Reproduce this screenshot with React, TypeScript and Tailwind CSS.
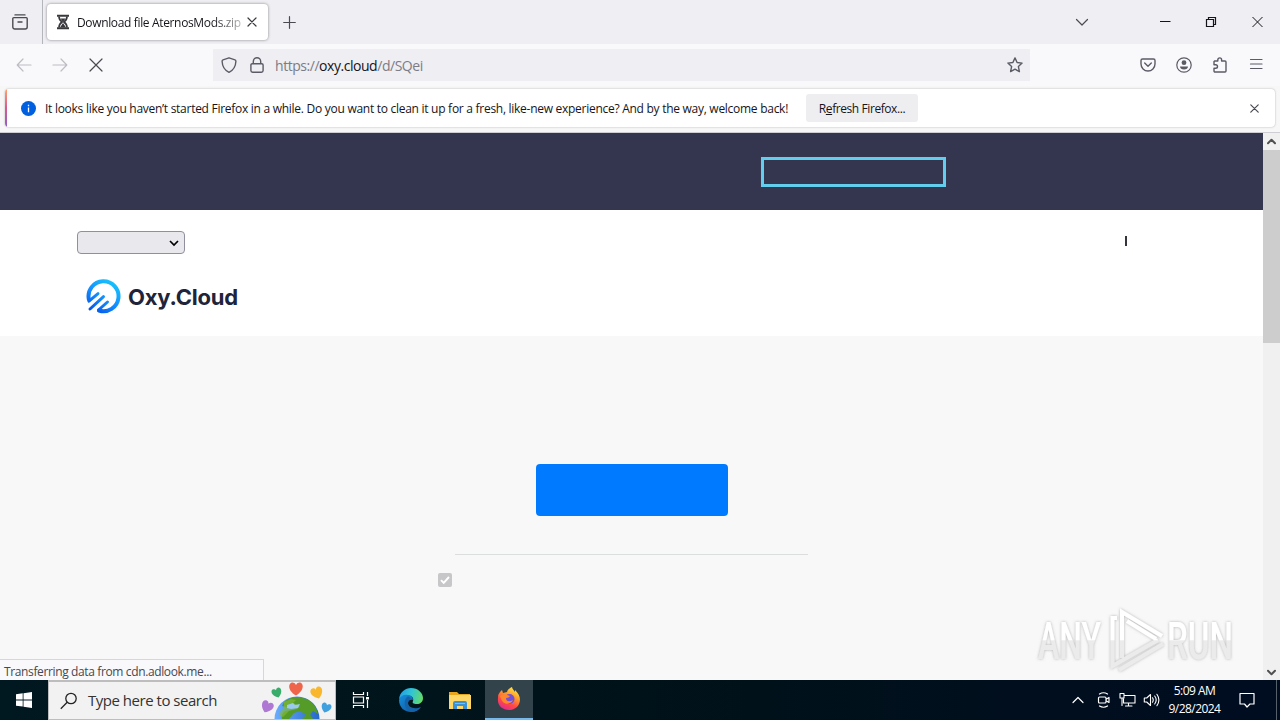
import type { ReactNode } from 'react';

interface IconProps {
  className?: string;
  children: ReactNode;
  box?: number;
}

// Thin line icon used through the browser chrome
function Icon({ className = '', children, box = 16 }: IconProps) {
  return (
    <svg
      aria-hidden
      viewBox={`0 0 ${box} ${box}`}
      className={`block shrink-0 ${className}`}
      fill="none"
      stroke="currentColor"
      strokeWidth="1.2"
      strokeLinecap="round"
      strokeLinejoin="round"
    >
      {children}
    </svg>
  );
}

function TabStrip() {
  return (
    <header className="flex h-[44px] shrink-0 bg-[#eeeef3] text-[#4a4a52]">
      <div className="flex w-[43px] items-center border-r border-[#b4b4bb] pl-3">
        <Icon className="h-4 w-4">
          <path d="M3 .9h10M1.8 3.6h12.4a1 1 0 0 1 1 1V13a2 2 0 0 1-2 2H2.8a2 2 0 0 1-2-2V4.600a1 1 0 0 1 1-1zM6 8h4" strokeWidth="1.4" />
        </Icon>
      </div>
      <div className="mt-1 ml-[4px] flex h-[36px] w-[221px] items-center rounded-[4px] bg-white pl-2 shadow-[0_0_3px_rgba(0,0,0,0.45)]">
        <svg aria-hidden viewBox="0 0 16 16" className="h-4 w-4 shrink-0">
          <path d="M2 1.700h12M2 14.300h12" stroke="#38383d" strokeWidth="2" />
          <path d="M4 2.500c0 3 1 4 3 5.500-2 1.500-3 2.500-3 5.500M12 2.500c0 3-1 4-3 5.500 2 1.500 3 2.500 3 5.500" stroke="#38383d" strokeWidth="1.700" fill="none" />
          <path d="M5.500 4.500h5L8 8zM8 9l3 4.500H5z" fill="#38383d" />
        </svg>
        <div className="ml-[6px] w-[167px] bg-gradient-to-r from-[#15141a] from-80% to-[#cccccc] bg-clip-text pt-[2px] text-[12px] tracking-[-0.35px] whitespace-nowrap text-transparent">
          Download file AternosMods.zip
        </div>
        <Icon className="ml-[3px] h-[10px] w-[10px] text-[#38383d]" box={10}>
          <path d="M1 1l8 8M9 1L1 9" />
        </Icon>
      </div>
      <Icon className="mt-4 ml-[15px] h-[13px] w-[13px]" box={13}>
        <path d="M6.500 .7v11.600M.7 6.500h11.600" />
      </Icon>
      <div className="ml-auto flex h-[44px] items-center">
        <Icon className="h-[14px] w-[14px]" box={14}>
          <path d="M1.500 4.500L7 10l5.500-5.500" />
        </Icon>
        <svg aria-hidden viewBox="0 0 104 12" className="mr-[16px] ml-[71px] h-3 w-[104px]" fill="none" stroke="#15141a">
          <path d="M0 5.500h10.500" />
          <path d="M46.500 3.500h7v7h-7zM48.500 3V1.500h7v7H54" strokeWidth="1.200" />
          <path d="M92.500 1l10 10M102.500 1l-10 10" />
        </svg>
      </div>
    </header>
  );
}

function NavBar() {
  return (
    <div className="flex h-[42px] shrink-0 items-center bg-[#f9f9fb] text-[#5b5b66]">
      <Icon className="ml-4 h-4 w-4 text-[#bdbdc4]">
        <path d="M15 8H1.500M7 2L1.200 8 7 14" />
      </Icon>
      <Icon className="ml-5 h-4 w-4 text-[#bdbdc4]">
        <path d="M1 8h13.500M9 2l5.800 6L9 14" />
      </Icon>
      <Icon className="ml-[21px] h-[14px] w-[14px] text-[#4a4a52]" box={14}>
        <path d="M1 1l12 12M13 1L1 13" />
      </Icon>
      <div className="ml-[110px] flex h-8 w-[817px] items-center bg-[#eeeef3] pl-2">
        <Icon className="h-4 w-4">
          <path d="M8 .8l6 2c.9.3.9.8.9 1.500C14.700 9.500 13 13 8 15.300 3 13 1.300 9.500 1.100 4.300c0-.7 0-1.200.9-1.500z" strokeWidth="1.400" />
        </Icon>
        <Icon className="ml-3 h-4 w-4">
          <path d="M3.200 6.700h9.600a1.300 1.300 0 0 1 1.300 1.300v5.500a1.700 1.700 0 0 1-1.700 1.700H3.600a1.700 1.700 0 0 1-1.700-1.700V8a1.300 1.300 0 0 1 1.300-1.300zM4.300 6.500V4.400a3.700 3.700 0 0 1 7.400 0v2.100" strokeWidth="1.400" />
        </Icon>
        <div className="ml-[10px] text-[14px] tracking-[-0.46px] whitespace-nowrap text-[#7c7c86]">
          https://<span className="text-[#15141a]">oxy.cloud</span>/d/SQei
        </div>
        <Icon className="mr-[7px] ml-auto h-4 w-4">
          <path d="M8 .9l2.100 4.600 5 .6-3.700 3.500 1 5L8 12.200l-4.400 2.400 1-5L.9 6.100l5-.6z" strokeWidth="1.400" />
        </Icon>
      </div>
      <div className="mr-[16px] ml-auto flex items-center gap-[20px]">
        <Icon className="h-4 w-4">
          <path d="M2.500 2h11a1.500 1.500 0 0 1 1.500 1.500V7A7 7 0 0 1 1 7V3.500A1.500 1.500 0 0 1 2.500 2zM4.700 6l3.300 3.200L11.300 6" strokeWidth="1.400" />
        </Icon>
        <Icon className="h-4 w-4">
          <circle cx="8" cy="8" r="7.200" />
          <circle cx="8" cy="5.700" r="2.400" fill="currentColor" stroke="none" />
          <path d="M4 9.500h8c0 1.800-1.700 3-4 3s-4-1.200-4-3z" fill="currentColor" stroke="none" />
        </Icon>
        <Icon className="h-4 w-4">
          <path d="M2.500 4h3.300V2.800a1.900 1.900 0 0 1 3.800 0V4H13a1 1 0 0 1 1 1v9a1 1 0 0 1-1 1H3a1 1 0 0 1-1-1v-2.700h1.700a1.800 1.800 0 0 0 0-3.600H2V4.500" strokeWidth="1.400" />
        </Icon>
        <Icon className="h-4 w-4">
          <path d="M2.500 2.500h11.500M2.500 7h11.500M2.500 11.500h11.500" />
        </Icon>
      </div>
    </div>
  );
}

function RefreshNotice() {
  return (
    <div className="h-[47px] shrink-0 border-b border-[#cfcfd3] bg-[#f7f7f8] px-[5px] pt-[3px]">
      <div className="flex h-[38px] items-center overflow-hidden rounded-[4px] bg-white shadow-[0_0_2px_rgba(0,0,0,0.3)]">
        <div className="h-full w-[2px] bg-gradient-to-b from-[#ffa266] via-[#d9578f] to-[#9059c8]" />
        <svg aria-hidden viewBox="0 0 16 16" className="ml-[14px] h-[15px] w-[15px]">
          <circle cx="8" cy="8" r="8" fill="#0060df" />
          <path d="M8 7v5M8 4v1.500" stroke="#fff" strokeWidth="1.400" />
        </svg>
        <p className="ml-[9px] w-[752px] pt-[2px] text-[12px] tracking-[-0.275px] whitespace-nowrap text-[#15141a]">
          It looks like you haven’t started Firefox in a while. Do you want to clean it up for a fresh, like-new experience? And by the way, welcome back!
        </p>
        <button className="ml-[9px] h-[28px] w-[112px] rounded-[3px] bg-[#eeeef1] pt-[2px] text-[12px] tracking-[-0.42px] whitespace-nowrap text-[#15141a]">
          R<span className="underline">e</span>fresh Firefox...
        </button>
        <Icon className="mr-4 ml-auto h-[9px] w-[9px] text-[#4a4a52]" box={9}>
          <path d="M.8 .8l7.400 7.400M8.200 .8L.8 8.200" />
        </Icon>
      </div>
    </div>
  );
}

function OxyLogo() {
  return (
    <div className="mt-[24px] ml-[8px] flex items-center">
      <svg aria-hidden viewBox="0 0 36 36" className="h-[36px] w-[36px]" fill="none" stroke="url(#oxy)" strokeWidth="4" strokeLinecap="round">
        <defs>
          <linearGradient id="oxy" x1="27" y1="3" x2="8" y2="33" gradientUnits="userSpaceOnUse">
            <stop offset="0" stopColor="#19c3fb" />
            <stop offset="0.550" stopColor="#138cff" />
            <stop offset="1" stopColor="#0757e8" />
          </linearGradient>
        </defs>
        <path d="M3.900 21.500A15 15 0 1 1 14 32.500" />
        <path d="M4 23.200L13 15.700M5 31L18.500 18.700M13.500 32L22.500 24" strokeWidth="3" />
      </svg>
      <span className="ml-[7px] pt-[2px] font-['Inter',sans-serif] text-[22px] leading-[30px] font-bold tracking-[-0.2px] whitespace-nowrap text-[#20243a]">
        Oxy.Cloud
      </span>
    </div>
  );
}

function Watermark() {
  return (
    <svg aria-label="ANY RUN" viewBox="0 0 214 72" className="absolute top-[604px] left-[1033px] h-[72px] w-[214px]">
      <defs>
        <filter id="wm" x="-10%" y="-10%" width="120%" height="125%">
          <feDropShadow dx="0" dy="0" stdDeviation="1.500" floodColor="#777" floodOpacity="0.550" />
        </filter>
        <linearGradient id="wmFill" x1="0" y1="0" x2="0" y2="72" gradientUnits="userSpaceOnUse">
          <stop offset="0.500" stopColor="#fff" />
          <stop offset="0.510" stopColor="#ebebeb" />
        </linearGradient>
      </defs>
      <g filter="url(#wm)" fill="url(#wmFill)" fontFamily="Roboto, sans-serif" fontSize="52" fontWeight="500">
        <text x="5" y="55" textLength="63" lengthAdjust="spacingAndGlyphs">ANY</text>
        <text x="134" y="55" textLength="66" lengthAdjust="spacingAndGlyphs">RUN</text>
        <g fill="none" stroke="url(#wmFill)" strokeWidth="4">
          <path d="M84 14h-4.500v48L125 36" />
          <path d="M89 54V8l40 24" />
          <path d="M94 17l29 18M86 66l44-26" />
        </g>
      </g>
    </svg>
  );
}

function WebPage() {
  return (
    <main className="flex h-[547px] shrink-0">
      <div className="flex w-[1263px] flex-col bg-[#f8f8f8]">
        <div className="h-[77px] bg-[#33364e] pt-6 pl-[761px]">
          <div className="h-[30px] w-[185px] border-[3px] border-[#62cdec]" />
        </div>
        <div className="flex h-[126px] justify-between bg-white pt-[21px] pr-[136px] pl-[77px]">
          <div>
            <div className="flex h-[23px] w-[108px] items-center justify-end rounded-[4px] border border-[#8f8f9d] bg-[#e9e9ed] pr-[5px]">
              <svg aria-hidden viewBox="0 0 10 10" className="h-[10px] w-[10px]" fill="none" stroke="#000" strokeWidth="1.700">
                <path d="M1 3l4 4 4-4" />
              </svg>
            </div>
            <OxyLogo />
          </div>
          <div className="mt-[5px] h-[10px] w-[2px] bg-[#34343c]" />
        </div>
        <div className="flex flex-col items-center pt-32">
          <div className="h-[52px] w-[192px] rounded-[4px] bg-[#007bff]" />
          <div className="mt-[38px] h-px w-[353px] bg-[#dcdddd]" />
          <div className="mt-[18px] mr-[373px] flex h-[14px] w-[14px] items-center justify-center rounded-[2px] bg-[#c7c7ca]">
            <svg aria-hidden viewBox="0 0 12 12" className="h-3 w-3" fill="none" stroke="#fff" strokeWidth="1.900">
              <path d="M2 6.200l2.700 2.700L10 3" />
            </svg>
          </div>
        </div>
        <div className="mt-auto h-[21px] w-[264px] border-t border-r border-[#d7d7db] bg-[#f9f9fb] pl-1 text-[12px] leading-[23px] tracking-[-0.37px] whitespace-nowrap text-[#47474f]">
          Transferring data from cdn.adlook.me...
        </div>
      </div>
      <div className="flex w-[17px] flex-col items-center bg-[#f0f0f0] text-[#505050]">
        <Icon className="mt-1 h-[9px] w-[9px]" box={9}>
          <path d="M1 6.200l3.500-3.500L8 6.200" strokeWidth="2" />
        </Icon>
        <div className="mt-1 h-[193px] w-full bg-[#cdcdcd]" />
        <Icon className="mt-auto mb-[3px] h-[9px] w-[9px]" box={9}>
          <path d="M1 2.800l3.500 3.500L8 2.800" strokeWidth="2" />
        </Icon>
      </div>
    </main>
  );
}

const HEART = 'M0 5C-7 1-6-5-2.500-5Q-.6-5 0-3Q.6-5 2.500-5C6-5 7 1 0 5z';

const HEARTS = [
  { at: 'translate(7 25) rotate(25) scale(1.15)', fill: '#ae78d3' },
  { at: 'translate(17 11) rotate(-20) scale(.95)', fill: '#37ad69' },
  { at: 'translate(36 7) scale(1.3)', fill: '#ee654b' },
  { at: 'translate(57 11) rotate(-20) scale(1.15)', fill: '#f8b72d' },
  { at: 'translate(66 26) rotate(20) scale(.95)', fill: '#3fa0df' },
];

function EarthArt() {
  return (
    <svg aria-hidden viewBox="0 0 75 37" className="ml-auto h-[37px] w-[75px] shrink-0">
      <defs>
        <linearGradient id="sea" x2="1">
          <stop stopColor="#6aadff" />
          <stop offset="1" stopColor="#2868c7" />
        </linearGradient>
      </defs>
      <circle cx="37" cy="37" r="22.500" fill="url(#sea)" />
      <path d="M24 20q6-5 13-5l10 2q9 5 11 15l-5-3-3 4 3 4H42l4-4-6-4-6 2-5 6h-7q-1-5 3-8l7-1 6-2-5-3-6 2-5-1z" fill="#549b27" />
      <path d="M24 20l7-3 5 1-3 3 7 3-3 3-8 2-6 6-3-1q-1-5 4-7z" fill="#83ba39" opacity=".65" />
      <path d="M27 23l6-2 2 2 5-1-2 4-7 1-4-1z" fill="#9bc9f1" />
      {HEARTS.map((h) => (
        <path key={h.fill} d={HEART} transform={h.at} fill={h.fill} />
      ))}
    </svg>
  );
}

function EdgeIcon() {
  return (
    <svg aria-hidden viewBox="0 0 24 24" className="h-6 w-6">
      <defs>
        <linearGradient id="edgeTop" x1="0" y1=".3" x2="1" y2=".5">
          <stop stopColor="#249de3" />
          <stop offset=".5" stopColor="#31c5d4" />
          <stop offset="1" stopColor="#65da69" />
        </linearGradient>
        <linearGradient id="edgeLow" x1="0" y1="0" x2="1" y2="1">
          <stop stopColor="#168edb" />
          <stop offset="1" stopColor="#0d5296" />
        </linearGradient>
      </defs>
      <path d="M0 11C1 4 6 0 12 0c7 0 12 5 12 10 0 4-3 6-6 6-4 0-5-1-4-3 1-3-1-5-4-5-4 0-8 1-10 3z" fill="url(#edgeTop)" />
      <path d="M0 12c1-4 5-6 9-5 3 0 5 2 5 5-2-1-5 0-5 3 0 4 4 7 8 6 2 0 4-1 5-2-2 3-6 5-10 5C5 24 0 19 0 12z" fill="url(#edgeLow)" />
      <path d="M8 9c-4 4-3 12 4 15 4 0 8-2 10-5-7 3-13 0-13-4 0-2 1-3 3-4-1-2-2-3-4-2z" fill="#1463a9" />
    </svg>
  );
}

function FolderIcon() {
  return (
    <svg aria-hidden viewBox="0 0 22 19" className="h-[19px] w-[22px]">
      <path d="M0 1h8l2 2h11v4H0z" fill="#e9a51c" />
      <path d="M0 4h22v14H0z" fill="#ffd767" />
      <path d="M4 18v-6q0-2 2-2h10q2 0 2 2v6h-4v-3H8v3z" fill="#3b91d6" />
      <path d="M6 12h10v1H6z" fill="#73c0f0" />
    </svg>
  );
}

function FirefoxIcon() {
  return (
    <svg aria-hidden viewBox="0 0 24 24" className="h-6 w-6">
      <defs>
        <linearGradient id="fox" x1=".8" y1="0" x2=".3" y2="1">
          <stop stopColor="#fff04a" />
          <stop offset=".38" stopColor="#ff9b2b" />
          <stop offset=".7" stopColor="#ff4748" />
          <stop offset="1" stopColor="#e22a8f" />
        </linearGradient>
      </defs>
      <path d="M3 5l2-2 1 3 4-1c1-3 3-4 5-5 0 2 2 3 3 5V3c5 5 6 9 4 14-2 4-6 6-10 6C5 23 0 18 1 11q0-4 2-6z" fill="url(#fox)" />
      <circle cx="12.500" cy="12" r="5" fill="#7250d8" />
      <path d="M3 9q4-3 7-1l3 1q-1 2-4 2c0 4 4 4 7 2-2 4-7 5-10 2-2-2-2-4-3-6z" fill="#ff882d" />
    </svg>
  );
}

function Taskbar() {
  return (
    <footer className="flex h-[40px] shrink-0 bg-gradient-to-r from-[#001820] via-[#001219] to-[#000c20] text-white">
      <div className="flex w-12 items-center justify-center">
        <svg aria-hidden viewBox="0 0 16 16" className="h-4 w-4" fill="#fff">
          <path d="M0 2.200l6.700-.9v6.200H0zM7.500 1.200L16 0v7.500H7.500zM0 8.400h6.700v6.200L0 13.700zM7.500 8.400H16V16l-8.500-1.200z" />
        </svg>
      </div>
      <div className="flex w-[288px] items-center border border-t-2 border-[#bdbdbd] bg-[#f2f2f2]">
        <svg aria-hidden viewBox="0 0 18 18" className="ml-[11px] h-[18px] w-[18px]" fill="none" stroke="#222" strokeWidth="1.300">
          <circle cx="11" cy="6.500" r="5.200" />
          <path d="M7.200 10.300L.8 16.700" />
        </svg>
        <span className="ml-[10px] text-[15px] tracking-[-0.48px] whitespace-nowrap text-[#333]">Type here to search</span>
        <EarthArt />
      </div>
      <div className="flex w-[49px] items-center justify-center">
        <svg aria-hidden viewBox="0 0 18 16" className="h-4 w-[18px]" fill="none" stroke="#fff" strokeWidth="1.200">
          <path d="M1.500 0v2.500h10V0M1.500 5h10v6h-10zM1.500 16v-2.500h10V16M15.500 0v4M15.500 8v8" />
          <path d="M14 5h3v2.500h-3z" fill="#fff" stroke="none" />
        </svg>
      </div>
      <div className="flex w-[51px] items-center justify-center"><EdgeIcon /></div>
      <div className="flex w-[49px] items-center justify-center pr-[2px]"><FolderIcon /></div>
      <div className="flex w-12 items-center justify-center border-b-2 border-[#76b9ed] bg-[#33434b]"><FirefoxIcon /></div>
      <div className="ml-auto flex items-center">
        <Icon className="h-3 w-3" box={12}>
          <path d="M1 8.500l5-5 5 5" />
        </Icon>
        <Icon className="ml-3 h-4 w-4">
          <path d="M3.500 5h5.500a1 1 0 0 1 1 1v4a1 1 0 0 1-1 1H3.500a1 1 0 0 1-1-1V6a1 1 0 0 1 1-1zM10.500 7L13 5.500v5L10.500 9M3.500 2Q7.500-.5 11.500 2M3.500 14q4 2.500 8 0" />
        </Icon>
        <Icon className="ml-[7px] h-4 w-[17px]">
          <path d="M5 3.500h10.500v7.500H4V7M.5 1.500h4V6h-4zM2.500 6v7.500M9 11v3M6 14h6.500" strokeWidth="1.100" />
        </Icon>
        <Icon className="ml-[7px] h-4 w-[17px]">
          <path d="M.8 6h2.400L7 2.500v11L3.200 10H.8zM9 5.800q1.500 2.200 0 4.400M11.200 4q3 4 0 8M13.400 2.300q4 5.700 0 11.400" strokeWidth="1.100" />
        </Icon>
        <div className="ml-2 w-[53px] text-center text-[12px] leading-[18px] tracking-[-0.55px] whitespace-nowrap">
          <div>5:09 AM</div>
          <div>9/28/2024</div>
        </div>
        <Icon className="ml-[17px] h-4 w-[18px]">
          <path d="M1 1.500h14v10.500h-4L8 15l-2.500-3H1z" />
        </Icon>
        <div className="ml-5 h-10 w-px bg-[#55606a]" />
        <div className="w-[3px]" />
      </div>
    </footer>
  );
}

export default function App() {
  return (
    <div className="relative flex h-[720px] w-[1280px] flex-col overflow-hidden font-['Open_Sans','Noto_Sans',sans-serif]">
      <TabStrip />
      <NavBar />
      <RefreshNotice />
      <WebPage />
      <Taskbar />
      <Watermark />
    </div>
  );
}
